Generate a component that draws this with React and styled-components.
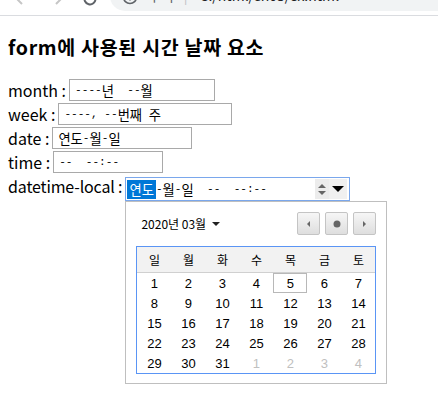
import React from 'react';
import styled, { createGlobalStyle } from 'styled-components';

const GlobalStyle = createGlobalStyle`
  body {
    margin: 0;
    background: #fff;
    font-family: 'Noto Sans CJK KR', 'Noto Sans', sans-serif;
    color: #000;
  }
`;

const Chrome = styled.div`
  height: 15px;
  border-bottom: 1px solid #dadce0;
  display: flex;
  align-items: flex-end;
  overflow: hidden;
`;

const NavIcon = styled.div`
  width: 20px;
  height: 20px;
  margin-left: ${(p) => p.$gap}px;
  margin-bottom: 8px;
  flex-shrink: 0;
  color: ${(p) => p.$color};
  display: flex;
  align-items: flex-end;
  justify-content: center;
`;

const AddressBar = styled.div`
  margin-left: 10px;
  margin-bottom: 4px;
  flex: 1;
  height: 30px;
  background: #f1f3f4;
  border-radius: 15px 0 0 15px;
  display: flex;
  align-items: flex-end;
  padding: 0 0 6px 12px;
  box-sizing: border-box;
  font-size: 14px;
  color: #5f6368;
  gap: 10px;
  white-space: nowrap;
`;

const Url = styled.span`
  color: #202124;
  &::before {
    content: '|';
    color: #bdc1c6;
    margin-right: 12px;
  }
`;

const Content = styled.div`
  padding: 0 8px;
`;

const Title = styled.h3`
  margin: 18px 0 19px;
  font-size: 19.5px;
  letter-spacing: 0.7px;
  font-weight: 700;
  line-height: 25px;
`;

const Row = styled.div`
  display: flex;
  align-items: ${(p) => (p.$top ? 'flex-start' : 'center')};
  min-height: 24px;
  font-size: 16px;
  white-space: nowrap;
`;

const Label = styled.span`
  margin-right: 3px;
  line-height: 24px;
  letter-spacing: ${(p) => (p.$tight ? '-0.15px' : '0')};
`;

const FieldStack = styled.div`
  display: flex;
  flex-direction: column;
  margin-top: 3px;
`;

const Field = styled.div`
  box-sizing: border-box;
  width: ${(p) => p.$w}px;
  height: ${(p) => (p.$focus ? 24 : 22)}px;
  border: 1px solid ${(p) => (p.$focus ? '#7aa7ec' : '#a9a9a9')};
  display: flex;
  align-items: center;
  padding-left: ${(p) => (p.$focus ? 1 : 5)}px;
  white-space: pre;
  background: #fff;
`;

const Half = styled.span`
  font-family: 'Liberation Mono', monospace;
  font-size: 11.1px;
`;

const Full = styled.span`
  font-family: 'Noto Sans CJK KR', sans-serif;
  font-size: 13.3px;
  padding: ${(p) => (p.$sel ? '0 2px' : '0')};
  background: ${(p) => (p.$sel ? '#0078d7' : 'transparent')};
  color: ${(p) => (p.$sel ? '#fff' : '#000')};
`;

const Spin = styled.div`
  margin-left: auto;
  width: 14px;
  height: 20px;
  background: #ececec;
  display: flex;
  flex-direction: column;
  align-items: center;
  justify-content: center;
  gap: 3px;
`;

const Drop = styled.div`
  width: 18px;
  height: 20px;
  margin-right: 2px;
  background: #f0f0f0;
  display: flex;
  align-items: center;
  justify-content: center;
`;

const Popup = styled.div`
  width: 262px;
  height: 183px;
  box-sizing: border-box;
  border: 1px solid #bfbfbf;
  background: #fff;
  padding: 10px;
  font-family: 'Liberation Sans', Arial, 'Noto Sans CJK KR', sans-serif;
`;

const PopHeader = styled.div`
  display: flex;
  align-items: center;
  height: 23px;
  margin-bottom: 11px;
`;

const MonthLabel = styled.div`
  padding-left: 5px;
  font-size: 12px;
  display: flex;
  align-items: center;
  gap: 6px;
  font-family: 'Noto Sans CJK KR', sans-serif;
`;

const NavGroup = styled.div`
  margin-left: auto;
  display: flex;
  gap: 5px;
`;

const NavButton = styled.div`
  box-sizing: border-box;
  width: 23px;
  height: 23px;
  border: 1px solid #c4c4c4;
  border-radius: 2px;
  background: linear-gradient(#f6f6f6, #dedede);
  display: flex;
  align-items: center;
  justify-content: center;
`;

const Calendar = styled.div`
  border: 1px solid #5a95f5;
  width: 240px;
  box-sizing: border-box;
`;

const WeekHead = styled.div`
  display: grid;
  grid-template-columns: repeat(7, 1fr);
  height: 25px;
  background: #f2f2f2;
  border-bottom: 1px solid #d0d0d0;
  font-family: 'Noto Sans CJK KR', sans-serif;
  font-size: 12px;
  align-items: center;
  text-align: center;
`;

const Days = styled.div`
  display: grid;
  grid-template-columns: repeat(7, 1fr);
  grid-auto-rows: 20px;
  font-size: 13px;
`;

const Day = styled.div`
  box-sizing: border-box;
  display: flex;
  align-items: center;
  justify-content: center;
  color: ${(p) => (p.$muted ? '#c0c0c0' : '#000')};
  border: 1px solid ${(p) => (p.$today ? '#b8b8b8' : 'transparent')};
`;

const weekdays = ['일', '월', '화', '수', '목', '금', '토'];
const days = [
  ...Array.from({ length: 31 }, (_, i) => ({ n: i + 1 })),
  ...[1, 2, 3, 4].map((n) => ({ n, muted: true })),
];

// split a mask like '----년  --월' into half-width and full-width runs
const MaskText = ({ text }) =>
  text.match(/[\x00-\x7f]+|[^\x00-\x7f]+/g).map((run, i) =>
    /[\x00-\x7f]/.test(run[0]) ? <Half key={i}>{run}</Half> : <Full key={i}>{run}</Full>
  );

const Tri = ({ dir, size = 4, color = '#555' }) => {
  const pts = {
    up: `0,${size} ${size},0 ${size * 2},${size}`,
    down: `0,0 ${size * 2},0 ${size},${size}`,
    left: `${size},0 ${size},${size * 2} 0,${size}`,
    right: `0,0 0,${size * 2} ${size},${size}`,
  }[dir];
  const vertical = dir === 'up' || dir === 'down';
  return (
    <svg width={vertical ? size * 2 : size} height={vertical ? size : size * 2}>
      <polygon points={pts} fill={color} />
    </svg>
  );
};

const App = () => (
  <>
    <GlobalStyle />
    <Chrome>
      <NavIcon $gap={12} $color='#c6c6c6'>
        <svg width='16' height='16' viewBox='0 0 16 16'>
          <path d='M14 8H3M8 3L3 8l5 5' stroke='currentColor' strokeWidth='2' fill='none' />
        </svg>
      </NavIcon>
      <NavIcon $gap={14} $color='#c6c6c6'>
        <svg width='16' height='16' viewBox='0 0 16 16'>
          <path d='M2 8h11M8 3l5 5-5 5' stroke='currentColor' strokeWidth='2' fill='none' />
        </svg>
      </NavIcon>
      <NavIcon $gap={14} $color='#5f6368'>
        <svg width='16' height='16' viewBox='0 0 16 16'>
          <path d='M13.5 8A5.5 5.5 0 1 1 11.5 3.7' stroke='currentColor' strokeWidth='2' fill='none' />
        </svg>
      </NavIcon>
      <AddressBar>
        <svg width='16' height='16' viewBox='0 0 16 16'>
          <circle cx='8' cy='8' r='6.5' stroke='#5f6368' strokeWidth='1.6' fill='none' />
          <rect x='7.2' y='7' width='1.6' height='4.5' fill='#5f6368' />
        </svg>
        <span>주의</span>
        <Url>C:/html/ch05/ex.html</Url>
      </AddressBar>
    </Chrome>
    <Content>
      <Title>form에 사용된 시간 날짜 요소</Title>
      <Row>
        <Label>month :</Label>
        <Field $w={146}>
          <MaskText text='----년  --월' />
        </Field>
      </Row>
      <Row>
        <Label>week :</Label>
        <Field $w={174}>
          <MaskText text='----, --번째 주' />
        </Field>
      </Row>
      <Row>
        <Label>date :</Label>
        <Field $w={140}>
          <MaskText text='연도-월-일' />
        </Field>
      </Row>
      <Row>
        <Label>time :</Label>
        <Field $w={110}>
          <MaskText text='--  --:--' />
        </Field>
      </Row>
      <Row $top>
        <Label $tight>datetime-local :</Label>
        <FieldStack>
          <Field $w={225} $focus>
            <Full $sel>연도</Full>
            <MaskText text='-월-일  --  --:--' />
            <Spin>
              <Tri dir='up' size={4} color='#666' />
              <Tri dir='down' size={4} color='#666' />
            </Spin>
            <Drop>
              <Tri dir='down' size={6} color='#000' />
            </Drop>
          </Field>
          <Popup>
            <PopHeader>
              <MonthLabel>
                2020년 03월
                <Tri dir='down' size={4} color='#222' />
              </MonthLabel>
              <NavGroup>
                <NavButton>
                  <Tri dir='left' size={3} color='#666' />
                </NavButton>
                <NavButton>
                  <svg width='8' height='8'>
                    <circle cx='4' cy='4' r='3.5' fill='#666' />
                  </svg>
                </NavButton>
                <NavButton>
                  <Tri dir='right' size={3} color='#666' />
                </NavButton>
              </NavGroup>
            </PopHeader>
            <Calendar>
              <WeekHead>
                {weekdays.map((d) => (
                  <span key={d}>{d}</span>
                ))}
              </WeekHead>
              <Days>
                {days.map((d, i) => (
                  <Day key={i} $muted={d.muted} $today={!d.muted && d.n === 5}>
                    {d.n}
                  </Day>
                ))}
              </Days>
            </Calendar>
          </Popup>
        </FieldStack>
      </Row>
    </Content>
  </>
);

export default App;
